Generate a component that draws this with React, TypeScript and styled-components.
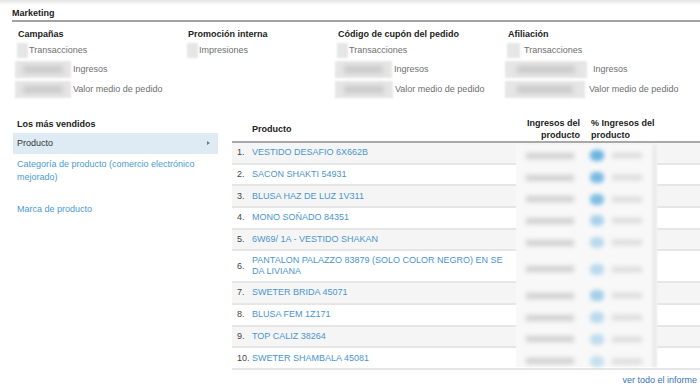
import React from "react";
import styled, {createGlobalStyle} from "styled-components";

const GlobalStyle = createGlobalStyle`
  html, body {
    margin: 0;
    padding: 0;
    background: #fff;
    font-family: "Liberation Sans", Arial, sans-serif;
    font-size: 9px;
    color: #333;
  }
`;

interface Metric {
    label: string;
    blurWidth: number;
    small?: boolean;
    gap?: number;
}

interface MetricColumn {
    title: string;
    width: number;
    metrics: Metric[];
}

const columns: MetricColumn[] = [
    {
        title: "Campañas", width: 170, metrics: [
            {label: "Transacciones", blurWidth: 11, small: true},
            {label: "Ingresos", blurWidth: 56, gap: 2},
            {label: "Valor medio de pedido", blurWidth: 56, gap: 2},
        ]
    },
    {
        title: "Promoción interna", width: 150, metrics: [
            {label: "Impresiones", blurWidth: 11, small: true},
        ]
    },
    {
        title: "Código de cupón del pedido", width: 170, metrics: [
            {label: "Transacciones", blurWidth: 11, small: true},
            {label: "Ingresos", blurWidth: 57, gap: 2},
            {label: "Valor medio de pedido", blurWidth: 58, gap: 2},
        ]
    },
    {
        title: "Afiliación", width: 180, metrics: [
            {label: "Transacciones", blurWidth: 13, small: true, gap: 4},
            {label: "Ingresos", blurWidth: 82, gap: 6},
            {label: "Valor medio de pedido", blurWidth: 80, gap: 4},
        ]
    },
];

const products = [
    "VESTIDO DESAFIO 6X662B",
    "SACON SHAKTI 54931",
    "BLUSA HAZ DE LUZ 1V311",
    "MONO SOÑADO 84351",
    "6W69/ 1A - VESTIDO SHAKAN",
    "PANTALON PALAZZO 83879 (SOLO COLOR NEGRO) EN SE DA LIVIANA",
    "SWETER BRIDA 45071",
    "BLUSA FEM 1Z171",
    "TOP CALIZ 38264",
    "SWETER SHAMBALA 45081",
];

// blue dot strength per row, the figures themselves are blurred in the source
const dotStrength = [1, 0.9, 0.85, 0.55, 0.45, 0.45, 0.6, 0.45, 0.4, 0.35];

const App: React.FC = () => {
    return (
        <Root>
            <GlobalStyle/>
            <TopShade/>
            <Section>
                <SectionTitle>Marketing</SectionTitle>
                <MetricsRow>
                    {columns.map(col => (
                        <Column key={col.title} width={col.width}>
                            <ColumnTitle>{col.title}</ColumnTitle>
                            {col.metrics.map(m => (
                                <MetricLine key={m.label} small={m.small}>
                                    <BlurBox width={m.blurWidth} small={m.small}>
                                        <BlurInner small={m.small}/>
                                    </BlurBox>
                                    <MetricLabel gap={m.gap ?? 1}>{m.label}</MetricLabel>
                                </MetricLine>
                            ))}
                        </Column>
                    ))}
                </MetricsRow>
            </Section>

            <Bottom>
                <SidePanel>
                    <SideTitle>Los más vendidos</SideTitle>
                    <SideItem active>
                        Producto
                        <Arrow/>
                    </SideItem>
                    <SideItem>Categoría de producto (comercio electrónico mejorado)</SideItem>
                    <SideItem>Marca de producto</SideItem>
                </SidePanel>

                <TableArea>
                    <HeadRow>
                        <HeadNum/>
                        <HeadProduct>Producto</HeadProduct>
                        <HeadRevenue>Ingresos del<br/>producto</HeadRevenue>
                        <HeadPercent>% Ingresos del<br/>producto</HeadPercent>
                    </HeadRow>
                    <Body>
                        {products.map((p, i) => (
                            <Row key={p} odd={i % 2 === 0} tall={i === 5}>
                                <Num>{i + 1}.</Num>
                                <ProductLink>{p}</ProductLink>
                                <Cell/>
                            </Row>
                        ))}
                        <Overlay>
                            {products.map((p, i) => (
                                <OverlayRow key={p} tall={i === 5}>
                                    <GrayBar/>
                                    <BlueDot style={{opacity: dotStrength[i]}}/>
                                    <LightBar/>
                                </OverlayRow>
                            ))}
                            <OverlayEdge/>
                        </Overlay>
                    </Body>
                    <Footer>
                        <FooterLink>ver todo el informe</FooterLink>
                    </Footer>
                </TableArea>
            </Bottom>
        </Root>
    );
};

export default App;

const Root = styled.div`
  width: 700px;
  height: 391px;
  overflow: hidden;
`;
const TopShade = styled.div`
  height: 5px;
  background: linear-gradient(#e4e4e4, #fff);
`;
const Section = styled.div`
  padding-left: 12px;
`;
const SectionTitle = styled.div`
  font-weight: bold;
  color: #222;
  line-height: 11px;
  padding: 3px 0 1px 0;
  border-bottom: 2px solid #a3a3a3;
`;
const MetricsRow = styled.div`
  display: flex;
  padding: 6px 0 0 6px;
`;
const Column = styled.div<{ width: number }>`
  width: ${p => p.width}px;
  display: flex;
  flex-direction: column;
`;
const ColumnTitle = styled.div`
  font-weight: bold;
  color: #222;
  line-height: 12px;
  margin-bottom: 1px;
`;
const MetricLine = styled.div<{ small?: boolean }>`
  display: flex;
  align-items: center;
  height: ${p => p.small ? 18 : 20}px;
  margin-left: ${p => p.small ? -1 : -3}px;
`;
const BlurBox = styled.span<{ width: number; small?: boolean }>`
  display: flex;
  align-items: center;
  justify-content: center;
  width: ${p => p.width}px;
  height: ${p => p.small ? 15 : 17}px;
  background: #e6e6e6;
  filter: blur(1px);
`;
const BlurInner = styled.span<{ small?: boolean }>`
  display: block;
  width: ${p => p.small ? 0 : 70}%;
  height: 7px;
  background: #c8c8c8;
  filter: blur(2.5px);
`;
const MetricLabel = styled.span<{ gap: number }>`
  margin-left: ${p => p.gap}px;
  color: #6f6f6f;
`;
const Bottom = styled.div`
  display: flex;
  margin-top: 18px;
`;
const SidePanel = styled.div`
  width: 205px;
  margin-left: 13px;
  margin-right: 14px;
  display: flex;
  flex-direction: column;
`;
const SideTitle = styled.div`
  font-weight: bold;
  color: #222;
  padding: 2px 0 3px 4px;
  line-height: 11px;
`;
const SideItem = styled.div<{ active?: boolean }>`
  position: relative;
  padding: ${p => p.active ? "5px 20px 5px 4px" : "4px 4px 15px 4px"};
  line-height: ${p => p.active ? 11 : 13}px;
  background: ${p => p.active ? "#deebf5" : "transparent"};
  color: ${p => p.active ? "#333" : "#4b9ad3"};
`;
const Arrow = styled.span`
  position: absolute;
  right: 8px;
  top: 8px;
  border-left: 3px solid #777;
  border-top: 2.5px solid transparent;
  border-bottom: 2.5px solid transparent;
`;
const TableArea = styled.div`
  flex: 1;
  display: flex;
  flex-direction: column;
`;
const HeadRow = styled.div`
  display: grid;
  grid-template-columns: 20px 264px 64px 100px 1fr;
  align-items: center;
  height: 24px;
  border-bottom: 2px solid #a8a8a8;
  font-weight: bold;
  color: #222;
  line-height: 12px;
`;
const HeadNum = styled.div``;
const HeadProduct = styled.div``;
const HeadRevenue = styled.div`
  text-align: right;
`;
const HeadPercent = styled.div`
  padding-left: 11px;
  white-space: nowrap;
`;
const Body = styled.div`
  position: relative;
`;
const Row = styled.div<{ odd: boolean; tall: boolean }>`
  display: grid;
  grid-template-columns: 20px 258px 1fr;
  align-items: center;
  height: ${p => p.tall ? 29.7 : 19.7}px;
  border-bottom: 2px solid #e6e6e6;
  background: ${p => p.odd ? "#f5f5f5" : "#fff"};
  line-height: 11px;
`;
const Num = styled.div`
  color: #444;
  padding-left: 5px;
  white-space: nowrap;
`;
const ProductLink = styled.div`
  color: #4a95cf;
`;
const Cell = styled.div``;
const Overlay = styled.div`
  position: absolute;
  left: 284px;
  top: 2px;
  width: 141px;
  bottom: 3px;
  background: #f8f8f8;
  display: flex;
  flex-direction: column;
`;
const OverlayRow = styled.div<{ tall: boolean }>`
  display: flex;
  align-items: center;
  height: ${p => p.tall ? 31.7 : 21.7}px;
  flex-shrink: 0;
`;
const GrayBar = styled.span`
  margin-left: 10px;
  width: 48px;
  height: 6px;
  background: #cfcfcf;
  filter: blur(2.5px);
`;
const BlueDot = styled.span`
  margin-left: 16px;
  width: 14px;
  height: 11px;
  border-radius: 5px;
  background: #6bb4e0;
  filter: blur(2px);
`;
const LightBar = styled.span`
  margin-left: 8px;
  width: 30px;
  height: 5px;
  background: #d8d8d8;
  filter: blur(2.5px);
`;
const OverlayEdge = styled.span`
  position: absolute;
  right: 0;
  top: 0;
  bottom: 0;
  width: 5px;
  background: #ececec;
  filter: blur(1px);
`;
const Footer = styled.div`
  display: flex;
  justify-content: flex-end;
  padding: 5px 3px 0 0;
`;
const FooterLink = styled.span`
  color: #3b73b9;
`;
